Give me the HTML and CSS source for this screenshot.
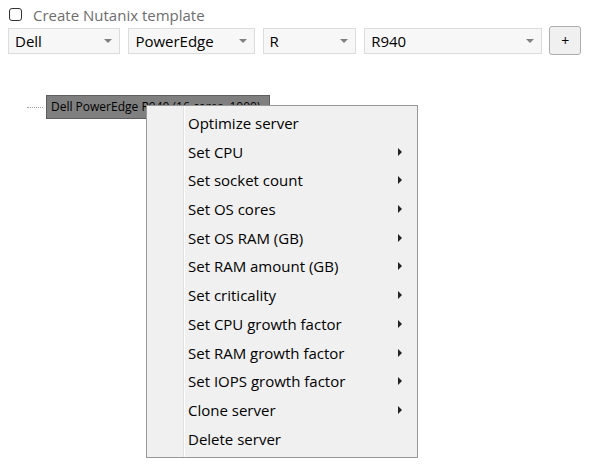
FILE: index.html
```html
<!DOCTYPE html>
<html lang="en">
<head>
    <meta charset="UTF-8">
    <title>Server designer</title>
    <link rel="stylesheet" href="styles.css">
</head>
<body>

<div class="panel">
    <label class="check-row">
        <span class="checkbox"></span>
        <span class="check-label">Create Nutanix template</span>
    </label>

    <div class="combo-row">
        <div class="combo combo-vendor"><span>Dell</span><i class="arrow"></i></div>
        <div class="combo combo-family"><span>PowerEdge</span><i class="arrow"></i></div>
        <div class="combo combo-series"><span>R</span><i class="arrow"></i></div>
        <div class="combo combo-model"><span>R940</span><i class="arrow"></i></div>
        <button class="add-btn">+</button>
    </div>

    <div class="tree">
        <div class="tree-node">
            <span class="tree-line"></span>
            <span class="node-label">Dell PowerEdge R940 (16 cores, 1000)</span>
        </div>

        <!-- context menu over the tree -->
        <ul class="context-menu">
            <li>Optimize server</li>
            <li class="sub">Set CPU</li>
            <li class="sub">Set socket count</li>
            <li class="sub">Set OS cores</li>
            <li class="sub">Set OS RAM (GB)</li>
            <li class="sub">Set RAM amount (GB)</li>
            <li class="sub">Set criticality</li>
            <li class="sub">Set CPU growth factor</li>
            <li class="sub">Set RAM growth factor</li>
            <li class="sub">Set IOPS growth factor</li>
            <li class="sub">Clone server</li>
            <li>Delete server</li>
        </ul>
    </div>
</div>

</body>
</html>
```

FILE: styles.css
```css
:root {
    --ui-font: "Open Sans", "Noto Sans", Arial, sans-serif;
    --combo-bg: #f7f7f7;
    --combo-border: #dcdcdc;
    --menu-bg: #f0f0f0;
    --menu-border: #979797;
}

body {
    margin: 0;
    background: #ffffff;
    font-family: var(--ui-font);
    color: #000;
}

.panel {
    padding: 6px 8px 0 8px;
}

.check-row {
    display: flex;
    align-items: center;
    height: 17px;
    padding-left: 1px;
}

.checkbox {
    width: 11px;
    height: 11px;
    border: 1px solid #333;
    border-radius: 3px;
    margin-right: 11px;
}

.check-label {
    font-size: 15px;
    color: #6d6d6d;
}

.combo-row {
    display: flex;
    align-items: center;
    gap: 8px;
    margin-top: 3px;
}

.combo {
    height: 24px;
    border: 1px solid var(--combo-border);
    background: var(--combo-bg);
    display: flex;
    align-items: center;
    justify-content: space-between;
    padding: 0 7px 0 6px;
    font-size: 15px;
    box-sizing: content-box;
}

.combo-vendor { width: 99px; }
.combo-family { width: 113px; }
.combo-series { width: 80px; }
.combo-model  { width: 166px; }

.arrow {
    width: 0;
    height: 0;
    border-left: 4px solid transparent;
    border-right: 4px solid transparent;
    border-top: 4px solid #808080;
}

.add-btn {
    width: 32px;
    height: 29px;
    margin-left: -1px;
    border: 1px solid #adadad;
    border-radius: 3px;
    background: #f0f0f0;
    font-family: var(--ui-font);
    font-size: 14px;
    padding: 0;
}

.tree {
    position: relative;
    margin-top: 40px;
    height: 380px;
}

.tree-node {
    display: flex;
    align-items: center;
    margin-left: 19px;
}

.tree-line {
    width: 16px;
    border-top: 1px dotted #a0a0a0;
    margin-right: 3px;
}

.node-label {
    height: 22px;
    width: 218px;
    line-height: 22px;
    padding-left: 4px;
    background: #7f7f7f;
    border: 1px solid #5e5e5e;
    font-size: 12px;
    white-space: nowrap;
    overflow: hidden;
}

.context-menu {
    position: absolute;
    left: 138px;
    top: 10px;
    width: 270px;
    margin: 0;
    padding: 3px 0 4px 0;
    list-style: none;
    background: var(--menu-bg);
    border: 1px solid var(--menu-border);
    /* icon gutter */
    background-image: linear-gradient(to right,
        transparent 36px, #e2e2e2 36px, #e2e2e2 37px,
        #ffffff 37px, #ffffff 38px, transparent 38px);
}

.context-menu li {
    position: relative;
    height: 28.7px;
    line-height: 28px;
    padding-left: 41px;
    font-size: 15px;
}

.context-menu li.sub::after {
    content: "";
    position: absolute;
    right: 15px;
    top: 10px;
    border-top: 4px solid transparent;
    border-bottom: 4px solid transparent;
    border-left: 4px solid #222;
}
```
